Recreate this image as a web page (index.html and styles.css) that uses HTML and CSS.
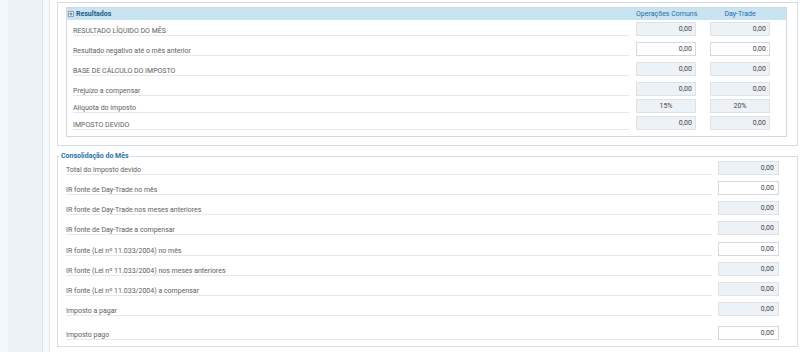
FILE: index.html
```html
<!DOCTYPE html>
<html lang="pt-BR">
<head>
  <meta charset="UTF-8" />
  <meta name="viewport" content="width=device-width, initial-scale=1.0" />
  <title>Resultados do Mês</title>
  <link rel="stylesheet" href="styles.css">
</head>
<body>
  <div class="page">
    <div class="rail"></div>
    <div class="gutter"></div>

    <div class="main">
      <div class="panel">
        <div class="results">
          <div class="results-head">
            <span class="head-title">
              <svg class="toggle" width="6" height="6" viewBox="0 0 6 6"><rect x="0.5" y="0.5" width="5" height="5" fill="#eef4f8" stroke="#8ea3b3"/><path d="M1.5 3h3M3 1.5v3" stroke="#5a7488" stroke-width="1"/></svg>
              Resultados
            </span>
            <span class="col-title">Operações Comuns</span>
            <span class="col-title last">Day-Trade</span>
          </div>

          <div class="row first">
            <span class="label">RESULTADO LÍQUIDO DO MÊS</span>
            <input class="field ro" value="0,00" readonly>
            <input class="field ro last" value="0,00" readonly>
          </div>
          <div class="row">
            <span class="label">Resultado negativo até o mês anterior</span>
            <input class="field" value="0,00">
            <input class="field last" value="0,00">
          </div>
          <div class="row">
            <span class="label">BASE DE CÁLCULO DO IMPOSTO</span>
            <input class="field ro" value="0,00" readonly>
            <input class="field ro last" value="0,00" readonly>
          </div>
          <div class="row">
            <span class="label">Prejuízo a compensar</span>
            <input class="field ro" value="0,00" readonly>
            <input class="field ro last" value="0,00" readonly>
          </div>
          <div class="row tight">
            <span class="label">Alíquota do imposto</span>
            <input class="field ro center" value="15%" readonly>
            <input class="field ro center last" value="20%" readonly>
          </div>
          <div class="row tight">
            <span class="label">IMPOSTO DEVIDO</span>
            <input class="field ro" value="0,00" readonly>
            <input class="field ro last" value="0,00" readonly>
          </div>
        </div>
      </div>

      <fieldset class="month">
        <legend>Consolidação do Mês</legend>
        <div class="line first">
          <span class="label">Total do imposto devido</span>
          <input class="field ro" value="0,00" readonly>
        </div>
        <div class="line">
          <span class="label">IR fonte de Day-Trade no mês</span>
          <input class="field" value="0,00">
        </div>
        <div class="line">
          <span class="label">IR fonte de Day-Trade nos meses anteriores</span>
          <input class="field ro" value="0,00" readonly>
        </div>
        <div class="line">
          <span class="label">IR fonte de Day-Trade a compensar</span>
          <input class="field ro" value="0,00" readonly>
        </div>
        <div class="line wide">
          <span class="label">IR fonte (Lei nº 11.033/2004) no mês</span>
          <input class="field" value="0,00">
        </div>
        <div class="line">
          <span class="label">IR fonte (Lei nº 11.033/2004) nos meses anteriores</span>
          <input class="field ro" value="0,00" readonly>
        </div>
        <div class="line">
          <span class="label">IR fonte (Lei nº 11.033/2004) a compensar</span>
          <input class="field ro" value="0,00" readonly>
        </div>
        <div class="line">
          <span class="label">Imposto a pagar</span>
          <input class="field ro" value="0,00" readonly>
        </div>
        <div class="line spaced">
          <span class="label">Imposto pago</span>
          <input class="field" value="0,00">
        </div>
      </fieldset>
    </div>
  </div>
</body>
</html>
```

FILE: styles.css
```css
body {
  margin: 0;
  font-family: Roboto, 'Liberation Sans', sans-serif;
  font-size: 7px;
  color: #5e5e5e;
  background: #fff;
  overflow: hidden;
}
.page {
  display: flex;
  height: 352px;
}
.rail {
  width: 34px;
  border-left: 8px solid #f4f7fa;
  border-right: 1px solid #d9e1e8;
  background: #edf2f7;
}
.gutter {
  width: 6px;
  background: #f6f8fa;
  border-right: 1px solid #e0e5ea;
}
.main {
  flex: 1;
  padding: 0 2px 0 7px;
}
.panel {
  margin-top: 2px;
  border: 1px solid #d6dde4;
  padding: 4px 10px 8px 8px;
}
.results {
  border: 1px solid #d0d9e1;
  padding-bottom: 6px;
}
.results-head {
  display: flex;
  align-items: center;
  height: 12px;
  background: #c8e3f2;
  padding-right: 16px;
}
.head-title {
  flex: 1;
  display: flex;
  align-items: center;
  gap: 2px;
  padding-left: 1px;
  font-weight: bold;
  color: #1d5b8a;
}
.col-title {
  width: 60px;
  margin-left: 7px;
  margin-right: 7px;
  text-align: center;
  color: #2b6ea6;
  white-space: nowrap;
}
.col-title.last {
  margin-right: 0;
}
.row {
  display: flex;
  align-items: flex-end;
  margin-top: 6px;
  padding: 0 16px 0 6px;
}
.row.first {
  margin-top: 2px;
}
.row.tight {
  margin-top: 3px;
}
.label {
  flex: 1;
  height: 14px;
  box-sizing: border-box;
  display: flex;
  align-items: flex-end;
  line-height: 8px;
  border-bottom: 1px solid #e4e9ee;
  white-space: nowrap;
}
.field {
  box-sizing: border-box;
  width: 60px;
  height: 14px;
  margin: 0 0 0 7px;
  padding: 0 3px 0 0;
  border: 1px solid #d3d9df;
  background: #fff;
  font-family: inherit;
  font-size: 7px;
  color: #444;
  text-align: right;
  outline: none;
}
.row .field {
  margin-right: 7px;
}
.row .field.last {
  margin-right: 0;
}
.field.ro {
  background: #edf2f7;
  border-color: #dde2e7;
}
.field.center {
  text-align: center;
  padding: 0;
}
.month {
  margin: 6px 0 0 0;
  padding: 0 18px 6px 8px;
  border: 1px solid #d6dde4;
  min-width: 0;
}
.month legend {
  margin-left: -7px;
  padding: 0 2px;
  line-height: 9px;
  font-weight: bold;
  color: #2574a9;
}
.line {
  display: flex;
  align-items: flex-end;
  margin-top: 6px;
}
.line.first {
  margin-top: 0;
}
.line.wide {
  margin-top: 7px;
}
.line.spaced {
  margin-top: 10px;
}
.line .field {
  width: 61px;
  margin-left: 6px;
  padding-right: 4px;
}
```
